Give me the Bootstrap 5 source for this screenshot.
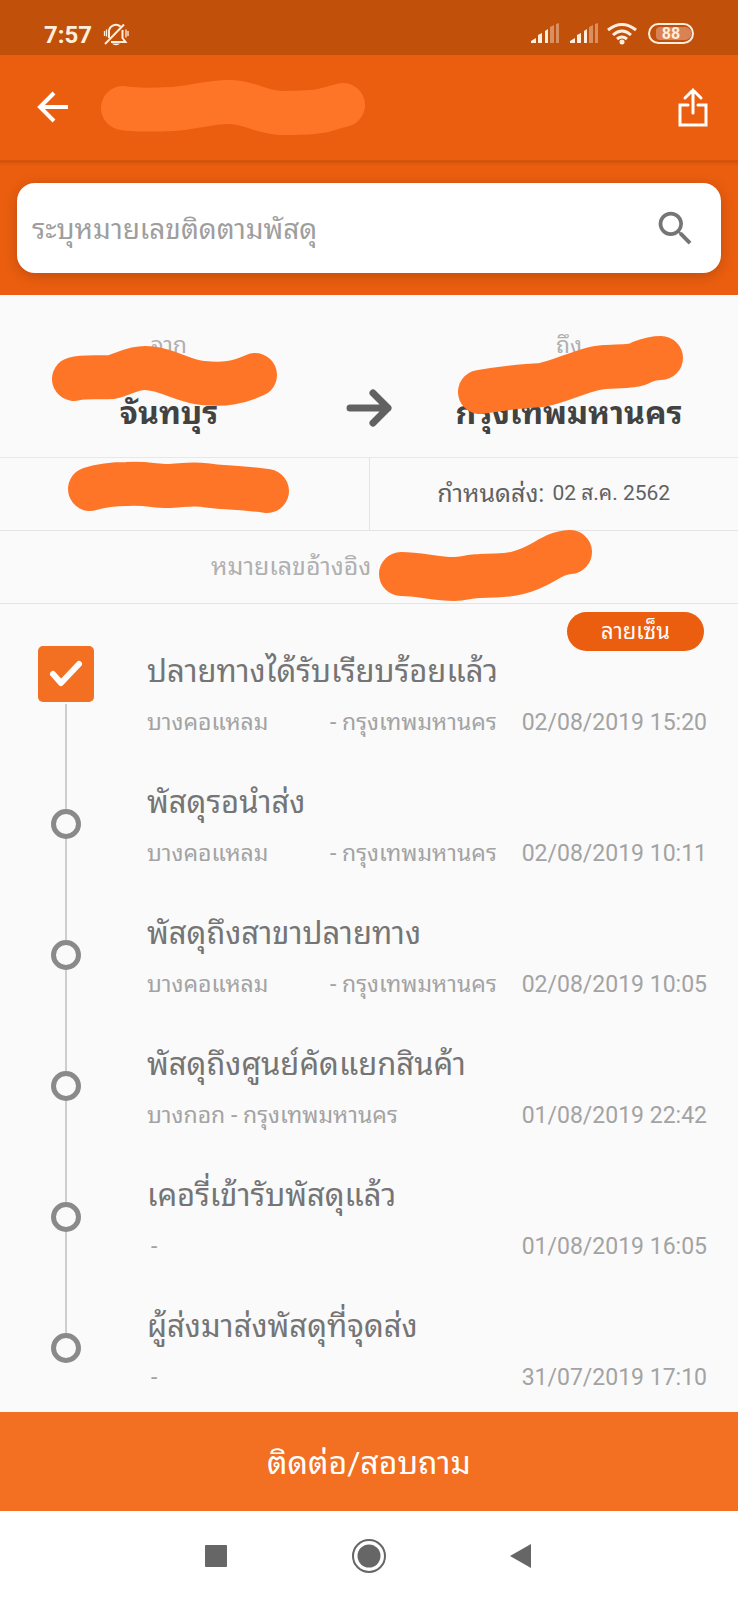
<!DOCTYPE html>
<html lang="th">
<head>
<meta charset="utf-8">
<meta name="viewport" content="width=device-width, initial-scale=1">
<title>ติดตามพัสดุ</title>
<link href="https://cdn.jsdelivr.net/npm/bootstrap@5.3.0/dist/css/bootstrap.min.css" rel="stylesheet">
<style>
  body { font-family: Roboto, "Noto Sans Thai Looped", "Noto Sans Thai", "Noto Sans", sans-serif; background: #fafafa; color: #616161; }
  svg { display: block; flex: none; }
  .status-bar { height: 55px; background: #c0500a; color: #ffeedd; padding: 13px 43px 0 44px; }
  .clock { font-size: 24px; font-weight: 700; line-height: 44px; }
  .bell-gap { gap: 11px; }
  .app-bar { height: 106px; background: #eb5e0f; padding: 0 28px 2px 34px; border-bottom: 1px solid #d5550d; }
  .icon-btn { background: none; border: 0; padding: 0; color: #fff; }
  .search-area { background: #eb5e0f; padding: 22px 17px; box-shadow: inset 0 5px 4px -4px #00000033; }
  .search-box { height: 90px; border-radius: 18px; background: #fff; padding: 0 23px 0 15px; box-shadow: 0 3px 14px #00000030; }
  .search-box input { font-size: 28px; border: 0; outline: 0; color: #616161; min-width: 0; background: none; }
  .search-box input::placeholder { color: #9e9e9e; opacity: 1; }
  .search-box .icon-btn { color: #757575; }
  .route { height: 163px; border-bottom: 1px solid #e8e8e8; padding-top: 34px; }
  .place { flex: 1 1 0; text-align: center; }
  .place-label { font-size: 23px; line-height: 34px; color: #b0b0b0; }
  .place-name { font-size: 32px; line-height: 40px; font-weight: 700; color: #424242; margin-top: 30px; }
  .route-arrow { margin-top: 55px; }
  .info-row { height: 73px; border-bottom: 1px solid #e4e4e4; }
  .info-row .half { flex: 1 1 0; }
  .info-row .half + .half { border-left: 1px solid #e4e4e4; }
  .due-label { font-size: 25px; }
  .due-date { font-size: 21px; }
  .ref-label { font-size: 25px; color: #b0b0b0; padding-left: 211px; }
  .scribble { fill: none; stroke: #ff7527; stroke-width: 44; stroke-linecap: round; stroke-linejoin: round; overflow: visible; }
  .title-mark { margin-left: 30px; }
  .over { position: absolute; left: 0; top: 0; pointer-events: none; }
  .over-end { left: 50%; }
  .timeline { padding: 25px 31px 0 0; }
  .sign-btn { position: absolute; right: 34px; top: 8px; width: 137px; height: 39px; border: 0; border-radius: 20px; background: #eb5e0f; color: #fff; font-size: 22px; line-height: 39px; padding: 0; }
  .stop { min-height: 131px; }
  .stop:last-child { min-height: 128px; }
  .track { width: 132px; flex: none; margin-right: 15px; }
  .rail { width: 2px; background: #cecece; }
  .rail-in { height: 49px; }
  .done-mark { width: 56px; height: 56px; border-radius: 5px; background: #f36f21; margin: 17px 0 2px; }
  .ring { width: 30px; height: 30px; border: 5px solid #8a8a8a; border-radius: 50%; }
  .stop-title { font-size: 31px; line-height: 44px; margin: 21px 0 0; font-weight: 400; color: #757575; }
  .stop-meta { font-size: 23px; line-height: 32px; margin-top: 13px; color: #a3a3a3; }
  .district { min-width: 183px; }
  .contact-btn { height: 99px; border: 0; background: #f36f21; color: #fff; font-size: 32px; padding-top: 4px; }
  .nav-strip { height: 89px; background: #fff; gap: 123px; }
  .nav-strip .icon-btn { color: #666; }
</style>
</head>
<body>
<div class="d-flex flex-column min-vh-100">
  <div class="status-bar d-flex justify-content-between align-items-start">
    <div class="d-flex align-items-center bell-gap">
      <span class="clock">7:57</span>
      <svg width="26" height="24" viewBox="0 0 26 24" fill="none" stroke="currentColor" stroke-width="2">
        <path d="M6 15V9.500a7 7 0 0 1 11.500-6M19.500 7v8l3 4H8M2 21 21 1.500"/>
        <path d="M9 20.500a4.500 3 0 0 0 8 0z" fill="currentColor" stroke="none"/>
        <path d="M1.500 8v5M3.500 6.500v7M23 6.500v8M25 8v5" stroke-width="1.300"/>
      </svg>
    </div>
    <div class="d-flex align-items-center pt-2">
      <svg width="28" height="25" viewBox="0 3 28 25" fill="currentColor"><path d="M0 25v-2l5-3v5zM7 17l4-2v10H7zM14 13l3-2v14h-3z"/><path d="M19 9l4-2v18h-4zM25 6l3-1v20h-3z" opacity=".4"/></svg>
      <svg class="ms-2 me-2" width="32" height="25" viewBox="-3 3 32 25" fill="currentColor"><path d="M0 25v-2l5-3v5zM7 17l4-2v10H7zM14 13l3-2v14h-3z"/><path d="M19 9l4-2v18h-4zM25 6l3-1v20h-3z" opacity=".4"/></svg>
      <svg width="30" height="22" viewBox="0 0 30 22" fill="none" stroke="currentColor" stroke-width="3"><path d="M1 7q14-11 28 0M6 12q9-8 18 0M10 16q5-4 10 0"/><circle cx="15" cy="19" r="2.500" fill="currentColor" stroke="none"/></svg>
      <svg class="ms-2" width="50" height="22" viewBox="-3 0 50 22"><rect x="1" y="1" width="44" height="19" rx="9.500" fill="none" stroke="currentColor" stroke-width="2"/><path d="M12 4h25a6.500 6.500 0 0 1 0 13H12q-4 0-4-4V8q0-4 4-4" fill="#d98354"/><text x="23" y="16" text-anchor="middle" font-size="16" font-weight="700" fill="currentColor">88</text></svg>
    </div>
  </div>

  <header class="app-bar d-flex align-items-center">
    <button class="icon-btn" type="button" aria-label="กลับ">
      <svg width="36" height="36" viewBox="0 0 36 36" fill="none" stroke="currentColor" stroke-width="4"><path d="M34 18H6M20 4 6 18l14 14"/></svg>
    </button>
    <svg class="scribble title-mark" width="266" height="58" viewBox="100 79 266 58"><path d="M123 109C132 111 150 111 173 110C190 109 210 103 229 103C250 103 262 114 283 114C300 114 318 113 325 111Q335 108 343 106"/></svg>
    <button class="icon-btn ms-auto" type="button" aria-label="แชร์">
      <svg width="34" height="40" viewBox="0 0 34 40" fill="none" stroke="currentColor" stroke-width="3" stroke-linecap="round"><path d="M12 18H4v20h26V18h-8M17 26V3M9 11l8-8 8 8"/></svg>
    </button>
  </header>

  <div class="search-area">
    <form class="search-box d-flex align-items-center">
      <input class="flex-grow-1 p-0 pt-1" type="text" aria-label="หมายเลขติดตามพัสดุ" placeholder="ระบุหมายเลขติดตามพัสดุ">
      <button class="icon-btn" type="button" aria-label="ค้นหา">
        <svg width="45" height="45" viewBox="0 0 24 24" fill="currentColor"><path d="M15.500 14h-.79l-.28-.27A6.471 6.471 0 0 0 16 9.500 6.500 6.500 0 1 0 9.500 16c1.610 0 3.090-.59 4.230-1.570l.27.28v.79l5 4.990L20.490 19l-4.990-5zm-6 0C7.010 14 5 11.990 5 9.500S7.010 5 9.500 5 14 7.010 14 9.500 11.990 14 9.500 14z"/></svg>
      </button>
    </form>
  </div>

  <section class="route d-flex position-relative">
    <div class="place">
      <div class="place-label">จาก</div>
      <div class="place-name">จันทบุรี</div>
    </div>
    <svg class="route-arrow" width="62" height="48" viewBox="0 0 62 48" fill="none" stroke="#616161" stroke-width="7" stroke-linecap="round" stroke-linejoin="round"><path d="M12 24h38M35 9l15 15-15 15"/></svg>
    <div class="place">
      <div class="place-label">ถึง</div>
      <div class="place-name">กรุงเทพมหานคร</div>
    </div>
    <svg class="scribble over" width="369" height="162" viewBox="0 295 369 162"><path d="M74 379C86 376 98 378 112 377C124 374 132 368 145 368C165 368 185 382 203 383C225 385 237 383 255 375"/></svg>
    <svg class="scribble over over-end" width="369" height="162" viewBox="369 295 369 162"><path d="M480 392C505 388 520 386 542 385C563 381 585 368 605 367C620 366 635 367 642 362Q652 358 661 358"/></svg>
  </section>

  <div class="info-row d-flex position-relative">
    <div class="half"></div>
    <div class="half d-flex align-items-center justify-content-center gap-2">
      <span class="due-label">กำหนดส่ง:</span><span class="due-date">02 ส.ค. 2562</span>
    </div>
    <svg class="scribble over" width="369" height="72" viewBox="0 458 369 72"><path d="M90 489C103 485 112 484 127 484C147 483 155 486 167 486C180 486 190 483 204 485C222 488 240 487 267 491"/></svg>
  </div>
  <div class="info-row d-flex align-items-center position-relative">
    <span class="ref-label">หมายเลขอ้างอิง</span>
    <svg class="scribble over over-end" width="369" height="72" viewBox="369 531 369 72"><path d="M401 574C420 574 435 579 454 579C464 579 470 576 480 576C500 575 507 576 517 573C545 566 550 553 570 552"/></svg>
  </div>

  <main class="timeline position-relative flex-grow-1">
    <button class="sign-btn" type="button">ลายเซ็น</button>
    <ol class="list-unstyled m-0">
      <li class="stop d-flex">
        <div class="track d-flex flex-column align-items-center">
          <div class="done-mark"><svg width="56" height="56" viewBox="0 0 56 56" fill="none" stroke="#fff" stroke-width="6" stroke-linecap="round" stroke-linejoin="round"><path d="M15 28l8 9 18-19"/></svg></div>
          <div class="rail flex-grow-1"></div>
        </div>
        <div class="flex-grow-1">
          <h2 class="stop-title">ปลายทางได้รับเรียบร้อยแล้ว</h2>
          <div class="stop-meta d-flex"><span class="district">บางคอแหลม</span><span>- กรุงเทพมหานคร</span><time class="ms-auto">02/08/2019 15:20</time></div>
        </div>
      </li>
      <li class="stop d-flex">
        <div class="track d-flex flex-column align-items-center"><div class="rail rail-in"></div><div class="ring"></div><div class="rail flex-grow-1"></div></div>
        <div class="flex-grow-1">
          <h2 class="stop-title">พัสดุรอนำส่ง</h2>
          <div class="stop-meta d-flex"><span class="district">บางคอแหลม</span><span>- กรุงเทพมหานคร</span><time class="ms-auto">02/08/2019 10:11</time></div>
        </div>
      </li>
      <li class="stop d-flex">
        <div class="track d-flex flex-column align-items-center"><div class="rail rail-in"></div><div class="ring"></div><div class="rail flex-grow-1"></div></div>
        <div class="flex-grow-1">
          <h2 class="stop-title">พัสดุถึงสาขาปลายทาง</h2>
          <div class="stop-meta d-flex"><span class="district">บางคอแหลม</span><span>- กรุงเทพมหานคร</span><time class="ms-auto">02/08/2019 10:05</time></div>
        </div>
      </li>
      <li class="stop d-flex">
        <div class="track d-flex flex-column align-items-center"><div class="rail rail-in"></div><div class="ring"></div><div class="rail flex-grow-1"></div></div>
        <div class="flex-grow-1">
          <h2 class="stop-title">พัสดุถึงศูนย์คัดแยกสินค้า</h2>
          <div class="stop-meta d-flex"><span>บางกอก - กรุงเทพมหานคร</span><time class="ms-auto">01/08/2019 22:42</time></div>
        </div>
      </li>
      <li class="stop d-flex">
        <div class="track d-flex flex-column align-items-center"><div class="rail rail-in"></div><div class="ring"></div><div class="rail flex-grow-1"></div></div>
        <div class="flex-grow-1">
          <h2 class="stop-title">เคอรี่เข้ารับพัสดุแล้ว</h2>
          <div class="stop-meta d-flex"><span class="ps-1">-</span><time class="ms-auto">01/08/2019 16:05</time></div>
        </div>
      </li>
      <li class="stop d-flex">
        <div class="track d-flex flex-column align-items-center"><div class="rail rail-in"></div><div class="ring"></div></div>
        <div class="flex-grow-1">
          <h2 class="stop-title">ผู้ส่งมาส่งพัสดุที่จุดส่ง</h2>
          <div class="stop-meta d-flex"><span class="ps-1">-</span><time class="ms-auto">31/07/2019 17:10</time></div>
        </div>
      </li>
    </ol>
  </main>

  <button class="contact-btn w-100" type="button">ติดต่อ/สอบถาม</button>

  <nav class="nav-strip d-flex align-items-center justify-content-center" aria-label="ระบบ">
    <button class="icon-btn" type="button" aria-label="ล่าสุด"><svg width="24" height="24" viewBox="0 0 24 24"><rect x="1" y="1" width="22" height="22" rx="1" fill="currentColor"/></svg></button>
    <button class="icon-btn" type="button" aria-label="หน้าหลัก"><svg width="36" height="36" viewBox="0 0 36 36"><circle cx="18" cy="18" r="16" fill="none" stroke="currentColor" stroke-width="2"/><circle cx="18" cy="18" r="11.500" fill="currentColor"/></svg></button>
    <button class="icon-btn" type="button" aria-label="ย้อนกลับ"><svg width="24" height="26" viewBox="0 0 24 26"><path d="M21 1v24L0 13z" fill="currentColor"/></svg></button>
  </nav>
</div>
<script src="https://cdn.jsdelivr.net/npm/bootstrap@5.3.0/dist/js/bootstrap.bundle.min.js"></script>
</body>
</html>
